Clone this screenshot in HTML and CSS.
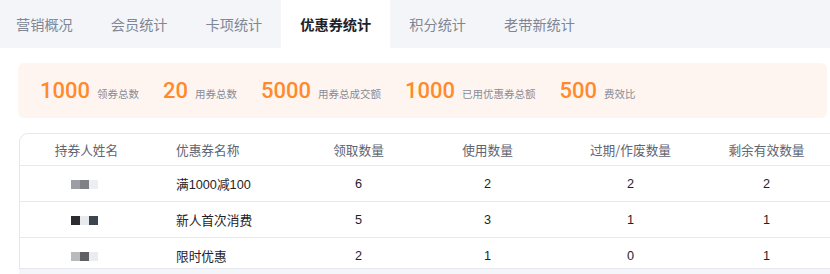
FILE: index.html
```html
<!DOCTYPE html>
<html lang="zh-CN">
<head>
<meta charset="utf-8">
<title>优惠券统计</title>
<link rel="stylesheet" href="styles.css">
</head>
<body>
<div class="page">
  <nav class="tabs">
    <div class="tab">营销概况</div>
    <div class="tab">会员统计</div>
    <div class="tab">卡项统计</div>
    <div class="tab active">优惠券统计</div>
    <div class="tab">积分统计</div>
    <div class="tab">老带新统计</div>
  </nav>

  <section class="summary">
    <div class="stat"><span class="num">1000</span><span class="label">领券总数</span></div>
    <div class="stat"><span class="num">20</span><span class="label">用券总数</span></div>
    <div class="stat"><span class="num">5000</span><span class="label">用券总成交额</span></div>
    <div class="stat"><span class="num">1000</span><span class="label">已用优惠券总额</span></div>
    <div class="stat"><span class="num">500</span><span class="label">费效比</span></div>
  </section>

  <div class="table-wrap">
    <table class="grid">
      <colgroup>
        <col class="c1"><col class="c2"><col class="c3"><col class="c4"><col class="c5"><col class="c6"><col class="c7">
      </colgroup>
      <thead>
        <tr>
          <th>持券人姓名</th>
          <th class="left">优惠券名称</th>
          <th>领取数量</th>
          <th>使用数量</th>
          <th>过期/作废数量</th>
          <th>剩余有效数量</th>
          <th></th>
        </tr>
      </thead>
      <tbody>
        <tr>
          <td><span class="blur"><i class="b g1"></i><i class="b g2"></i><i class="b g3"></i></span></td>
          <td class="left">满1000减100</td>
          <td>6</td><td>2</td><td>2</td><td>2</td><td></td>
        </tr>
        <tr>
          <td><span class="blur"><i class="b d1"></i><i class="b d2"></i><i class="b d3"></i></span></td>
          <td class="left">新人首次消费</td>
          <td>5</td><td>3</td><td>1</td><td>1</td><td></td>
        </tr>
        <tr>
          <td><span class="blur"><i class="b h1"></i><i class="b h2"></i><i class="b h3"></i></span></td>
          <td class="left">限时优惠</td>
          <td>2</td><td>1</td><td>0</td><td>1</td><td></td>
        </tr>
      </tbody>
    </table>
    <div class="hscroll"></div>
  </div>
</div>
</body>
</html>
```

FILE: styles.css
```css
html, body {
  margin: 0;
  padding: 0;
  background: #ffffff;
  overflow: hidden;
}

.page {
  width: 830px;
  height: 274px;
  overflow: hidden;
  font-family: "Liberation Sans", "Noto Sans CJK SC", sans-serif;
}

.tabs {
  display: flex;
  height: 48px;
  background: #f4f5f9;
}

.tab {
  display: flex;
  align-items: center;
  padding: 0 19px;
  font-size: 14.2px;
  color: #808693;
  font-family: "Noto Sans CJK SC", sans-serif;
}

.tab:first-child {
  padding-left: 16px;
}

.tab.active {
  background: #ffffff;
  color: #1d2129;
  font-weight: 700;
}

.summary {
  display: flex;
  align-items: baseline;
  gap: 24px;
  margin: 15px 3px 0 18px;
  height: 55px;
  box-sizing: border-box;
  padding: 16px 0 0 22px;
  background: #fff5f0;
  border-radius: 6px;
}

.stat {
  display: flex;
  align-items: baseline;
  gap: 7px;
}

.num {
  font-family: Roboto, "Liberation Sans", sans-serif;
  font-weight: 500;
  font-size: 22px;
  color: #ff8a2b;
  line-height: 24px;
}

.label {
  font-family: "Noto Sans CJK SC", sans-serif;
  font-size: 10.5px;
  color: #878c97;
}

.table-wrap {
  position: relative;
  margin: 15px 0 0 19px;
  height: 141px;
  overflow: hidden;
}

.grid {
  width: 900px;
  table-layout: fixed;
  border-collapse: separate;
  border-spacing: 0;
  border: 1px solid #e5e8ef;
  border-top-left-radius: 9px;
  font-family: "Noto Sans CJK SC", sans-serif;
  font-size: 12.7px;
}

.c1 { width: 133px; }
.c2 { width: 141px; }
.c3 { width: 129px; }
.c4 { width: 129px; }
.c5 { width: 157px; }
.c6 { width: 115px; }
.c7 { width: auto; }

.grid th {
  height: 31px;
  padding: 0;
  font-weight: 400;
  color: #5e6472;
  text-align: center;
}

.grid td {
  height: 35px;
  padding: 0;
  border-top: 1px solid #e8eaf0;
  color: #1f2329;
  text-align: center;
}

.grid tbody td {
  font-family: "Liberation Sans", "Noto Sans CJK SC", sans-serif;
}

.grid .left {
  text-align: left;
  padding-left: 23px;
}

.blur {
  display: inline-flex;
  vertical-align: middle;
  margin-left: -4px;
}

.b {
  display: block;
  width: 9px;
  height: 9px;
}

.g1 { background: #9c9ea3; }
.g2 { background: #7e8085; }
.g3 { background: #eceef2; }
.d1 { background: #2b2c30; }
.d2 { background: #e9eaed; }
.d3 { background: #3b4550; }
.h1 { background: #b9babd; }
.h2 { background: #5f6064; }
.h3 { background: #ebecf0; }

.hscroll {
  position: absolute;
  left: 0;
  right: 0;
  bottom: 0;
  height: 5px;
  background: #f4f5f8;
  border-top: 1px solid #e6e8ee;
}
```
